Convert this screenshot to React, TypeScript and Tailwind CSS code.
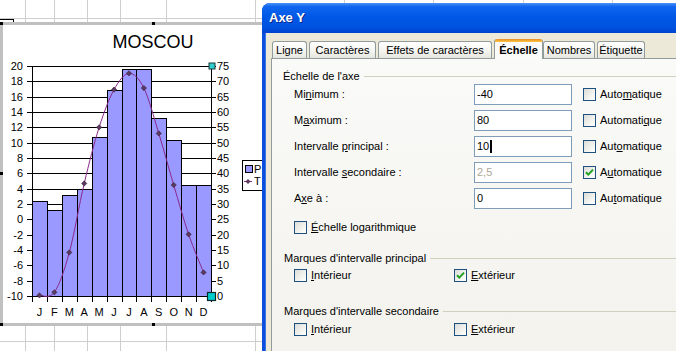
import React from 'react';

const months = ['J', 'F', 'M', 'A', 'M', 'J', 'J', 'A', 'S', 'O', 'N', 'D'];
const precip = [2.4, 1.2, 3.2, 4.0, 10.8, 16.9, 19.6, 19.6, 13.2, 10.4, 4.5, 4.5];
const temp = [0.2, 1.2, 14.2, 36.7, 55, 67.3, 72.6, 67.8, 53, 36.2, 20.1, 7.7];

function Chart() {
  const X0 = 32, X1 = 211, Y0 = 66, Y1 = 296;
  const bw = (X1 - X0) / 12;
  const yL = (v: number) => Y0 + ((20 - v) * (Y1 - Y0)) / 30;
  const yR = (v: number) => Y1 - (v * (Y1 - Y0)) / 75;
  const pts = temp.map((t, i) => [X0 + bw * (i + 0.5), yR(t)]);
  let d = `M${pts[0][0]},${pts[0][1]}`;
  for (let i = 0; i < pts.length - 1; i++) {
    const p0 = pts[i - 1] || pts[i];
    const p1 = pts[i];
    const p2 = pts[i + 1];
    const p3 = pts[i + 2] || p2;
    const c1 = [p1[0] + (p2[0] - p0[0]) / 6, p1[1] + (p2[1] - p0[1]) / 6];
    const c2 = [p2[0] - (p3[0] - p1[0]) / 6, p2[1] - (p3[1] - p1[1]) / 6];
    d += ` C${c1[0]},${c1[1]} ${c2[0]},${c2[1]} ${p2[0]},${p2[1]}`;
  }
  const levels = Array.from({ length: 16 }, (_, k) => 20 - 2 * k);
  const font = 'Liberation Sans, Arial, sans-serif';
  return (
    <svg width="259" height="298" className="block">
      <g transform="translate(-3,-25)" fontFamily={font}>
        <text x="153" y="48" fontSize="18" textAnchor="middle" fill="#000">MOSCOU</text>
        {levels.map((v, k) => {
          const y = Math.round(yL(v)) + 0.5;
          return (
            <g key={v}>
              <line x1={27} x2={216} y1={y} y2={y} stroke="#000" strokeWidth="1" />
              <text x="23" y={y + 3.5} fontSize="11" textAnchor="end" fill="#000">{v}</text>
              <text x="217" y={y + 3.5} fontSize="11" fill="#000">{75 - 5 * k}</text>
            </g>
          );
        })}
        {precip.map((v, i) => {
          const x = Math.round(X0 + bw * i) + 0.5;
          const x2 = Math.round(X0 + bw * (i + 1)) + 0.5;
          const y = Math.round(yL(v)) + 0.5;
          return <rect key={i} x={x} y={y} width={x2 - x} height={Y1 + 0.5 - y} fill="#9999ff" stroke="#000" strokeWidth="1" />;
        })}
        <line x1="32.5" x2="32.5" y1="66" y2="297" stroke="#000" />
        <line x1="211.5" x2="211.5" y1="66" y2="297" stroke="#000" />
        {Array.from({ length: 13 }, (_, i) => {
          const x = Math.round(X0 + bw * i) + 0.5;
          return <line key={i} x1={x} x2={x} y1={296} y2={302} stroke="#000" />;
        })}
        {months.map((m, i) => (
          <text key={i} x={X0 + bw * (i + 0.5)} y="316" fontSize="11" textAnchor="middle" fill="#000">{m}</text>
        ))}
        <path d={d} fill="none" stroke="#8a2a8a" strokeWidth="1" />
        {pts.map((p, i) => (
          <polygon key={i} points={`${p[0]},${p[1] - 2.6} ${p[0] + 2.6},${p[1]} ${p[0]},${p[1] + 2.6} ${p[0] - 2.6},${p[1]}`} fill="#5a3a5e" stroke="#3a1f3c" strokeWidth="0.6" />
        ))}
        <rect x="209" y="63" width="6" height="6" fill="#33cccc" stroke="#1a3a3a" strokeWidth="1" />
        <rect x="207.5" y="292.5" width="8" height="8" fill="#00cccc" stroke="#0a2a2a" strokeWidth="1.2" />
        <rect x="242.5" y="160.5" width="40" height="30" fill="#fff" stroke="#000" />
        <rect x="245.5" y="165.5" width="7" height="7" fill="#9999ff" stroke="#000" />
        <text x="254" y="173" fontSize="11" fill="#000">P</text>
        <line x1="244" x2="252" y1="181.5" y2="181.5" stroke="#8a2a8a" />
        <polygon points="248,179 250.5,181.5 248,184 245.5,181.5" fill="#5a3a5e" />
        <text x="254" y="185" fontSize="11" fill="#000">T</text>
      </g>
    </svg>
  );
}

function Check({ checked }: { checked?: boolean }) {
  return (
    <div className="w-[13px] h-[13px] shrink-0 border border-[#1c5180] bg-[linear-gradient(135deg,#dcdcd7,#f6f6f3_70%,#ffffff)] flex items-center justify-center">
      {checked && (
        <svg width="11" height="11" viewBox="0 0 11 11">
          <path d="M2 5.2 L4.3 7.6 L9 2.6" fill="none" stroke="#21a121" strokeWidth="2" />
        </svg>
      )}
    </div>
  );
}

function Field({ value, disabled, caret }: { value: string; disabled?: boolean; caret?: boolean }) {
  return (
    <div className="w-[98px] h-[21px] shrink-0 border border-[#7f9db9] bg-white flex items-center pl-[2px]">
      <span className={disabled ? 'text-[#aca899]' : 'text-black'}>{value}</span>
      {caret && <span className="w-[2px] h-[13px] bg-black ml-[1px]" />}
    </div>
  );
}

function GroupHeader({ children, className }: { children: React.ReactNode; className: string }) {
  return (
    <div className={`flex items-center h-[12px] ${className}`}>
      <span className="whitespace-nowrap">{children}</span>
      <div className="flex-1 h-px bg-[#d0d0bf] ml-[4px]" />
    </div>
  );
}

function Row({ label, field, auto }: { label: React.ReactNode; field: React.ReactNode; auto: React.ReactNode }) {
  return (
    <div className="flex items-center h-[21px]">
      <div className="w-[180px] shrink-0">{label}</div>
      {field}
      <div className="ml-[11px]">{auto}</div>
    </div>
  );
}

function Auto({ checked, children }: { checked?: boolean; children: React.ReactNode }) {
  return (
    <div className="flex items-center gap-[4px]">
      <Check checked={checked} />
      <span>{children}</span>
    </div>
  );
}

function Tabs() {
  const base = 'h-[17px] border border-b-0 border-[#919b9c] rounded-t-[3px] bg-[linear-gradient(to_bottom,#ffffff,#f3f3ef_60%,#e6e5df)] flex items-center justify-center pt-[1px] shrink-0';
  return (
    <div className="flex items-end h-[19px] relative z-10 ml-[1px]">
      <div className={`${base} w-[35px]`}>Ligne</div>
      <div className={`${base} w-[67px] ml-[2px]`}>Caractères</div>
      <div className={`${base} w-[114px] ml-[2px]`}>Effets de caractères</div>
      <div className="h-[20px] mb-[-1px] w-[49px] ml-[2px] shrink-0 border-x border-[#919b9c] rounded-t-[3px] bg-[#fbfbfa] flex flex-col">
        <div className="h-[3px] rounded-t-[2px] bg-[linear-gradient(to_bottom,#e68b2c,#ffc73c)]" />
        <div className="flex-1 flex items-center justify-center font-bold">Échelle</div>
      </div>
      <div className={`${base} w-[52px]`}>Nombres</div>
      <div className={`${base} w-[48px] ml-[2px]`}>Étiquette</div>
    </div>
  );
}

function Dialog() {
  return (
    <div className="absolute left-[262px] top-[3px] w-[430px] h-[360px] rounded-tl-[8px] overflow-hidden flex flex-col bg-[#0b4fdc] font-['Liberation_Sans',Arial,sans-serif] text-[11px] text-black">
      <div className="h-[30px] shrink-0 flex items-center pl-[7px] bg-[linear-gradient(to_bottom,#4a92f8,#1066ee_12%,#0058e6_45%,#0052e0_80%,#0044cf)]">
        <span className="font-bold text-[13px] text-white [text-shadow:1px_1px_0_#0a2a8c]">Axe Y</span>
      </div>
      <div className="flex-1 ml-[3px] border-l border-[#3b76e8] bg-[#ece9d8] pt-[6px] pl-[5px] flex flex-col">
        <Tabs />
        <div className="flex-1 border border-[#919b9c] bg-[linear-gradient(to_bottom,#fafaf8,#f3f2ed)] pl-[11px] pt-[11px] flex flex-col">
          <GroupHeader className="">Échelle de l'axe</GroupHeader>
          <div className="ml-[11px] mt-[2px] flex flex-col gap-[5px]">
            <Row label={<span>Mi<u>n</u>imum :</span>} field={<Field value="-40" />} auto={<Auto>Auto<u>m</u>atique</Auto>} />
            <Row label={<span>M<u>a</u>ximum :</span>} field={<Field value="80" />} auto={<Auto>Automati<u>q</u>ue</Auto>} />
            <Row label={<span>Intervalle <u>p</u>rincipal :</span>} field={<Field value="10" caret />} auto={<Auto>Aut<u>o</u>matique</Auto>} />
            <Row label={<span>Intervalle <u>s</u>econdaire :</span>} field={<Field value="2,5" disabled />} auto={<Auto checked>A<u>u</u>tomatique</Auto>} />
            <Row label={<span>A<u>x</u>e à :</span>} field={<Field value="0" />} auto={<Auto>Au<u>t</u>omatique</Auto>} />
          </div>
          <div className="ml-[11px] mt-[12px] flex items-center h-[13px] gap-[4px]">
            <Check />
            <span><u>É</u>chelle logarithmique</span>
          </div>
          <GroupHeader className="mt-[18px] ml-[1px]">Marques d'intervalle principal</GroupHeader>
          <div className="ml-[11px] mt-[5px] flex items-center h-[13px]">
            <div className="w-[160px] flex items-center gap-[4px]"><Check /><span><u>I</u>ntérieur</span></div>
            <div className="flex items-center gap-[4px]"><Check checked /><span><u>E</u>xtérieur</span></div>
          </div>
          <GroupHeader className="mt-[23px] ml-[1px]">Marques d'intervalle secondaire</GroupHeader>
          <div className="ml-[11px] mt-[6px] flex items-center h-[13px]">
            <div className="w-[160px] flex items-center gap-[4px]"><Check /><span><u>I</u>ntérieur</span></div>
            <div className="flex items-center gap-[4px]"><Check /><span><u>E</u>xtérieur</span></div>
          </div>
        </div>
      </div>
    </div>
  );
}

function SheetRow({ h }: { h: string }) {
  const cells = ['w-[26px]', 'w-[29px]', 'w-[33px]', 'w-[33px]', 'w-[46px]', 'w-[89px]', 'w-[89px]', 'w-[89px]', 'w-[90px]', 'w-[89px]', 'w-[89px]'];
  return (
    <div className={`flex shrink-0 border-b border-[#cfcfcf] ${h}`}>
      {cells.map((c, i) => (
        <div key={i} className={`${c} shrink-0 border-r border-[#cfcfcf]`} />
      ))}
    </div>
  );
}

export default function App() {
  return (
    <div className="relative w-[676px] h-[351px] overflow-hidden bg-white">
      <div className="flex flex-col">
        <SheetRow h="h-[19px]" />
        <SheetRow h="h-[323px]" />
        <SheetRow h="h-[20px]" />
      </div>
      <div className="absolute left-0 top-[19px] w-[14px] h-[3px] border-t border-r border-black" />
      <div className="absolute left-0 top-[22px] w-[262px] h-[304px] border-t-[3px] border-l-[3px] border-b-[3px] border-[#c0c0c0] bg-white overflow-hidden">
        <Chart />
      </div>
      <div className="absolute left-0 top-[22px] w-[3px] h-[3px] bg-black" />
      <div className="absolute left-[152px] top-[22px] w-[3px] h-[3px] bg-black" />
      <div className="absolute left-0 top-[172px] w-[3px] h-[3px] bg-black" />
      <div className="absolute left-0 top-[323px] w-[3px] h-[3px] bg-black" />
      <div className="absolute left-[152px] top-[323px] w-[3px] h-[3px] bg-black" />
      <Dialog />
    </div>
  );
}
